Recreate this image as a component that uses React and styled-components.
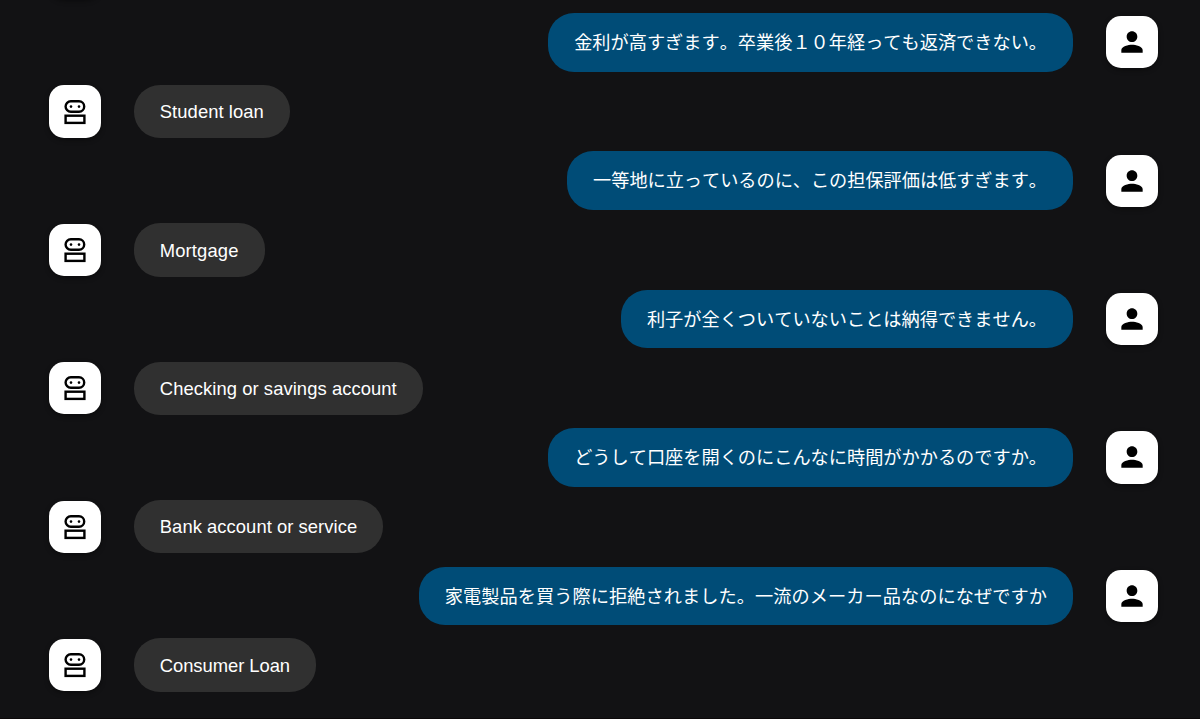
import styled, { createGlobalStyle } from "styled-components"

const GlobalStyle = createGlobalStyle`
    body {
        margin: 0;
        background: #121214;
        overflow: hidden;
    }

    * {
        box-sizing: border-box;
    }
`

const Chat = styled.main`
    height: 719px;
    overflow: hidden;
    display: flex;
    flex-direction: column;
    justify-content: flex-end;
    background: #121214;
    border-bottom: 1px solid #0c090a;
    font-family: "Liberation Sans", "Noto Sans CJK JP", sans-serif;
`

const MessageList = styled.div`
    display: flex;
    flex-direction: column;
    padding: 0 42px 18.4px 48.8px;
`

const Message = styled.div`
    display: flex;
    flex-shrink: 0;
    flex-direction: ${({ $user }) => ($user ? "row-reverse" : "row")};
    align-items: center;
    gap: 32.8px;
    height: 69.2px;
`

const Avatar = styled.div`
    display: flex;
    align-items: center;
    justify-content: center;
    flex-shrink: 0;
    width: 52.2px;
    height: 52.2px;
    border-radius: 15px;
    background: #fff;
    box-shadow: 0 2px 5px rgba(0, 0, 0, 0.4);

    svg {
        display: block;
    }
`

const Bubble = styled.p`
    display: flex;
    align-items: center;
    margin: 0;
    height: ${({ $user }) => ($user ? "58.6px" : "53.4px")};
    padding: 1.4px 26px 0;
    border-radius: 26px;
    background: ${({ $user }) => ($user ? "#004c77" : "#303030")};
    color: #fff;
    font-size: ${({ $user }) => ($user ? "18.2px" : "18.4px")};
    font-kerning: ${({ $user }) => ($user ? "none" : "auto")};
    letter-spacing: ${({ $tracking }) => $tracking}px;
    line-height: 26px;
    white-space: nowrap;
`

const messages = [
    { text: "" },
    { user: true, text: "金利が高すぎます。卒業後１０年経っても返済できない。" },
    { text: "Student loan", tracking: 0.07 },
    { user: true, text: "一等地に立っているのに、この担保評価は低すぎます。", tracking: -0.03 },
    { text: "Mortgage", tracking: 0.13 },
    { user: true, text: "利子が全くついていないことは納得できません。" },
    { text: "Checking or savings account", tracking: 0.07 },
    { user: true, text: "どうして口座を開くのにこんなに時間がかかるのですか。" },
    { text: "Bank account or service", tracking: 0.05 },
    { user: true, text: "家電製品を買う際に拒絶されました。一流のメーカー品なのになぜですか", tracking: 0.06 },
    { text: "Consumer Loan", tracking: -0.05 },
]

const RobotIcon = () => (
    <svg width="32" height="32" viewBox="0 0 32 32" fill="none" stroke="#000" strokeWidth="2.4">
        <rect x="6.6" y="5.3" width="18.6" height="10.4" rx="5.2" />
        <rect x="6.6" y="19.7" width="18.8" height="7.2" />
        <circle cx="12" cy="10.6" r="1.3" fill="#000" stroke="none" />
        <circle cx="20" cy="10.6" r="1.3" fill="#000" stroke="none" />
    </svg>
)

const PersonIcon = () => (
    <svg width="32" height="32" viewBox="0 0 24 24" fill="#000">
        <path d="M12 12c2.21 0 4-1.79 4-4s-1.79-4-4-4-4 1.79-4 4 1.79 4 4 4zm0 2c-2.67 0-8 1.34-8 4v2h16v-2c0-2.66-5.33-4-8-4z" />
    </svg>
)

export default function App() {
    return (
        <>
            <GlobalStyle />
            <Chat>
                <MessageList>
                    {messages.map(({ user, text, tracking = 0 }, i) => (
                        <Message key={i} $user={user}>
                            <Avatar>{user ? <PersonIcon /> : <RobotIcon />}</Avatar>
                            {text && <Bubble $user={user} $tracking={tracking}>{text}</Bubble>}
                        </Message>
                    ))}
                </MessageList>
            </Chat>
        </>
    )
}
